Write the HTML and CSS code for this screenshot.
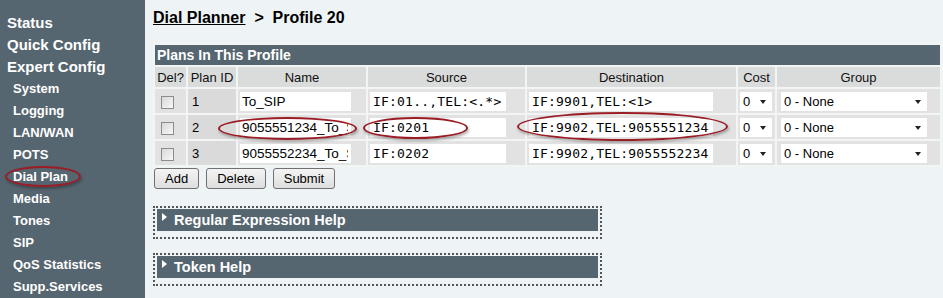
FILE: index.html
```html
<!DOCTYPE html>
<html lang="en">
<head>
    <meta charset="UTF-8">
    <title>Dial Planner</title>
    <link rel="stylesheet" href="styles.css">
</head>
<body>

<div class="page">
    <nav class="side">
        <a class="top" href="#">Status</a>
        <a class="top" href="#">Quick Config</a>
        <a class="top" href="#">Expert Config</a>
        <a class="sub" href="#">System</a>
        <a class="sub" href="#">Logging</a>
        <a class="sub" href="#">LAN/WAN</a>
        <a class="sub" href="#">POTS</a>
        <a class="sub" href="#">Dial Plan</a>
        <a class="sub" href="#">Media</a>
        <a class="sub" href="#">Tones</a>
        <a class="sub" href="#">SIP</a>
        <a class="sub" href="#">QoS Statistics</a>
        <a class="sub" href="#">Supp.Services</a>
    </nav>

    <main class="main">
        <div class="title"><a class="crumb" href="#">Dial Planner</a>&nbsp; &gt; &nbsp;Profile 20</div>

        <table class="plans">
            <colgroup>
                <col class="c-del">
                <col class="c-id">
                <col class="c-name">
                <col class="c-src">
                <col class="c-dst">
                <col class="c-cost">
                <col class="c-group">
            </colgroup>
            <tr>
                <td class="bar" colspan="7">Plans In This Profile</td>
            </tr>
            <tr>
                <th>Del?</th>
                <th>Plan ID</th>
                <th>Name</th>
                <th>Source</th>
                <th>Destination</th>
                <th>Cost</th>
                <th>Group</th>
            </tr>
            <tr>
                <td><input class="chk" type="checkbox"></td>
                <td class="id">1</td>
                <td><input class="txt name" type="text" value="To_SIP"></td>
                <td><input class="txt mono src" type="text" value="IF:01..,TEL:<.*>"></td>
                <td><input class="txt mono dst" type="text" value="IF:9901,TEL:<1>"></td>
                <td><span class="selwrap cost"><select><option>0</option></select></span></td>
                <td><span class="selwrap group"><select><option>0 - None</option></select></span></td>
            </tr>
            <tr>
                <td><input class="chk" type="checkbox"></td>
                <td class="id">2</td>
                <td><input class="txt name" type="text" value="9055551234_To_SIP"></td>
                <td><input class="txt mono src" type="text" value="IF:0201"></td>
                <td><input class="txt mono dst" type="text" value="IF:9902,TEL:9055551234"></td>
                <td><span class="selwrap cost"><select><option>0</option></select></span></td>
                <td><span class="selwrap group"><select><option>0 - None</option></select></span></td>
            </tr>
            <tr>
                <td><input class="chk" type="checkbox"></td>
                <td class="id">3</td>
                <td><input class="txt name" type="text" value="9055552234_To_SIP"></td>
                <td><input class="txt mono src" type="text" value="IF:0202"></td>
                <td><input class="txt mono dst" type="text" value="IF:9902,TEL:9055552234"></td>
                <td><span class="selwrap cost"><select><option>0</option></select></span></td>
                <td><span class="selwrap group"><select><option>0 - None</option></select></span></td>
            </tr>
        </table>

        <div class="buttons">
            <button>Add</button>
            <button>Delete</button>
            <button>Submit</button>
        </div>

        <div class="help">
            <div class="help-bar"><span class="arrow"></span>Regular Expression Help</div>
        </div>
        <div class="help">
            <div class="help-bar"><span class="arrow"></span>Token Help</div>
        </div>
    </main>
</div>

<!-- red circles drawn over the screenshot -->
<div class="mark m-nav"></div>
<div class="mark m-name"></div>
<div class="mark m-src"></div>
<div class="mark m-dst"></div>

</body>
</html>
```

FILE: styles.css
```css
body {
    margin: 0;
    padding: 0;
    font-family: "Liberation Sans", Arial, sans-serif;
    background-color: #eef4f5;
    position: relative;
    overflow: hidden;
}
.page {
    display: flex;
    height: 100vh;
}
.side {
    width: 145px;
    flex: none;
    background-color: #566670;
    padding-top: 12px;
    box-sizing: border-box;
}
.side a {
    display: block;
    color: white;
    font-weight: bold;
    text-decoration: none;
    line-height: 22px;
    white-space: nowrap;
}
.side .top {
    font-size: 15px;
    padding-left: 7px;
}
.side .sub {
    font-size: 13px;
    padding-left: 13px;
}
.main {
    flex: 1;
    padding: 8px 0 0 8px;
}
.title {
    font-size: 16px;
    font-weight: bold;
    line-height: 20px;
    color: black;
    margin-bottom: 15px;
}
.crumb {
    color: black;
    text-decoration: underline;
}
.plans {
    table-layout: fixed;
    width: 789px;
    border-spacing: 2px;
    background-color: #f3f5f5;
    font-size: 13px;
}
.c-del { width: 31px; }
.c-id { width: 48px; }
.c-name { width: 128px; }
.c-src { width: 157px; }
.c-dst { width: 209px; }
.c-cost { width: 37px; }
.c-group { width: 163px; }
.plans td, .plans th {
    padding: 0 2px;
    white-space: nowrap;
    overflow: hidden;
}
.plans .bar {
    background-color: #566670;
    color: white;
    font-weight: bold;
    font-size: 14px;
    height: 20px;
    padding-left: 2px;
}
.plans th {
    background-color: #dadcdc;
    font-weight: normal;
    text-align: center;
    height: 20px;
    color: #111;
}
.plans tr td {
    height: 24px;
    background-color: #e2e2e2;
}
.plans td.id {
    padding-left: 4px;
    background-color: #dadada;
}
.chk {
    appearance: none;
    width: 13px;
    height: 13px;
    margin: 0 0 0 4px;
    border: 1px solid #8c8c8c;
    box-sizing: border-box;
    background: linear-gradient(135deg, #d8d8d8, #f8f8f8);
    vertical-align: middle;
}
.txt {
    height: 19px;
    border: none;
    padding: 0 3px;
    box-sizing: border-box;
    background-color: white;
    vertical-align: middle;
    color: black;
}
.name {
    width: 111px;
    padding-left: 2px;
    font-family: "Liberation Sans", Arial, sans-serif;
    font-size: 13.5px;
}
.mono {
    font-family: "DejaVu Sans Mono", monospace;
    font-size: 13px;
    letter-spacing: 0.2px;
}
.src { width: 136px; }
.dst { width: 184px; }
.selwrap {
    position: relative;
    display: inline-block;
    vertical-align: middle;
}
.selwrap select {
    appearance: none;
    border: none;
    border-radius: 0;
    background-color: white;
    height: 19px;
    padding: 0 0 0 3px;
    font-family: "Liberation Sans", Arial, sans-serif;
    font-size: 13px;
    color: black;
    display: block;
}
.selwrap::after {
    content: "";
    position: absolute;
    right: 6px;
    top: 8px;
    border-top: 4px solid #222;
    border-left: 3.5px solid transparent;
    border-right: 3.5px solid transparent;
}
.cost select { width: 32px; }
.group {
    margin-left: 2px;
}
.group select { width: 146px; }
.buttons {
    display: flex;
    gap: 7px;
    margin: 1px 0 17px 1px;
}
.buttons button {
    height: 21px;
    padding: 0 10px;
    font-family: "Liberation Sans", Arial, sans-serif;
    font-size: 13px;
    color: black;
    border: 1px solid #707070;
    border-radius: 3px;
    background: linear-gradient(#f4f4f4, #dedede);
}
.help {
    width: 441px;
    border: 2px dotted #555;
    padding: 1px 2px 6px 2px;
    margin-bottom: 14px;
}
.help-bar {
    background-color: #566670;
    color: white;
    font-weight: bold;
    font-size: 14.5px;
    height: 22px;
    line-height: 22px;
    display: flex;
    align-items: center;
    padding-left: 5px;
}
.arrow {
    width: 0;
    height: 0;
    border-left: 5px solid white;
    border-top: 4px solid transparent;
    border-bottom: 4px solid transparent;
    margin: -6px 7px 0 0;
}
.mark {
    position: absolute;
    border: 2px solid #9a1c24;
    border-radius: 50%;
    box-shadow: 1px 2px 3px rgba(0, 0, 0, 0.3);
    box-sizing: border-box;
}
.m-nav { left: 5px; top: 166px; width: 76px; height: 21px; }
.m-name { left: 218px; top: 117px; width: 139px; height: 23px; }
.m-src { left: 363px; top: 117px; width: 105px; height: 22px; }
.m-dst { left: 517px; top: 112px; width: 211px; height: 29px; }
```
